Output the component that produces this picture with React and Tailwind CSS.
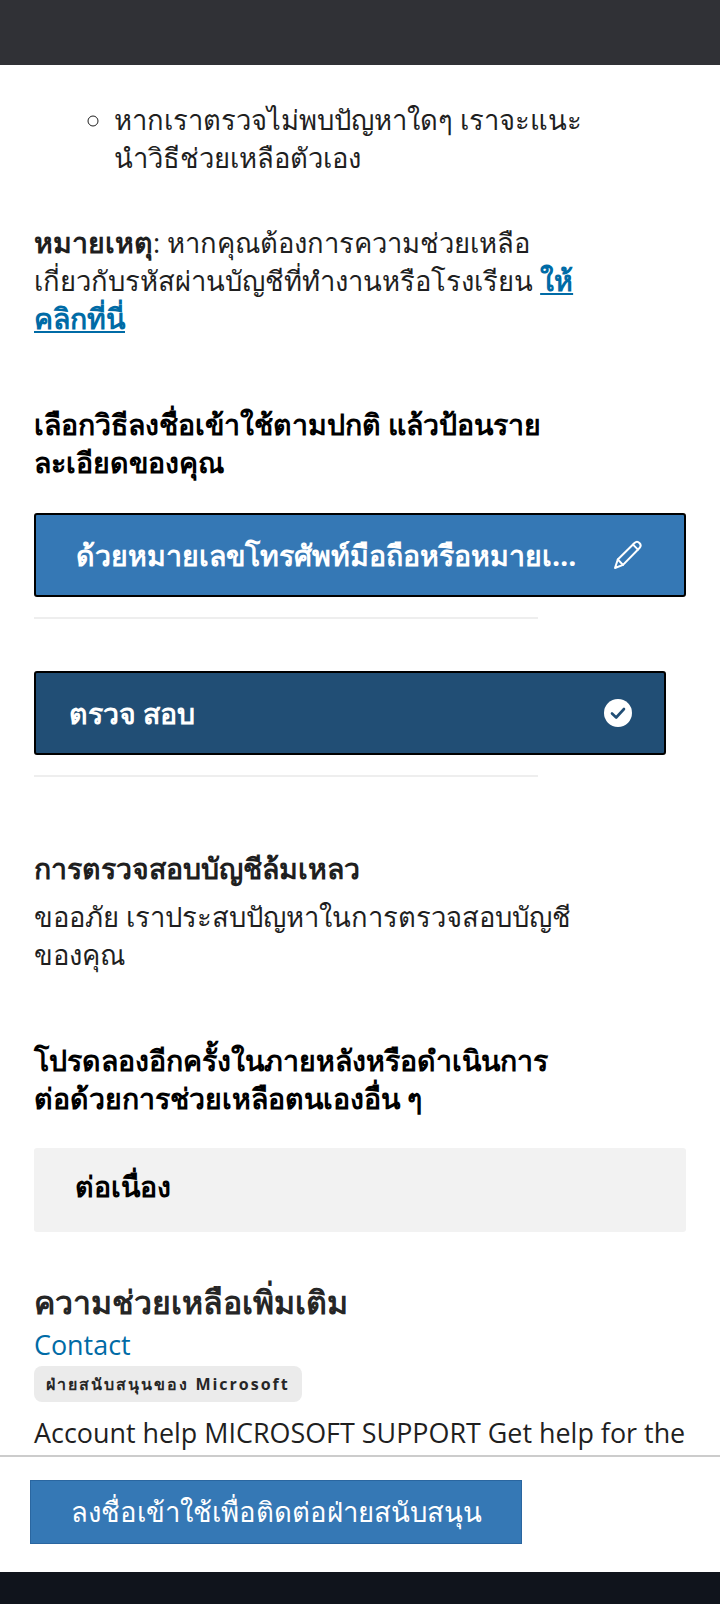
function PencilIcon() {
  return (
    <svg className="shrink-0" width="30" height="30" viewBox="0 0 30 30" fill="none" stroke="white" strokeWidth="2" strokeLinejoin="round" strokeLinecap="round">
      <path d="M1 28 L3.8 19.5 L20.5 3 C22 1.6 24 1.6 25.4 3 C26.9 4.5 26.9 6.5 25.5 8 L9 24.9 Z" />
      <path d="M3.8 19.5 L9 24.9" />
      <path d="M19 4.6 L24 9.6" />
    </svg>
  )
}

function CheckIcon() {
  return (
    <svg width="28" height="28" viewBox="0 0 28 28">
      <circle cx="14" cy="14" r="14" fill="white" />
      <path d="M8 14.5 L12.2 18.5 L20 10" fill="none" stroke="#214e75" strokeWidth="2.6" strokeLinecap="round" strokeLinejoin="round" />
    </svg>
  )
}

export default function App() {
  return (
    <div className="flex h-[1604px] w-[720px] flex-col overflow-hidden bg-white font-['Open_Sans','Noto_Sans',sans-serif] text-[#1f1f1f]">
      <div className="h-[65px] shrink-0 bg-[#303136]" />

      <main className="min-h-0 flex-1 overflow-hidden px-[34px] text-[27.4px] leading-[38px]">
        <ul className="mt-[36px] ml-[80px] list-[circle]">
          <li>หากเราตรวจไม่พบปัญหาใดๆ เราจะแนะ<br />นำวิธีช่วยเหลือตัวเอง</li>
        </ul>

        <p className="mt-[47px]">
          <b className="text-[28.5px] leading-none">หมายเหตุ</b>: หากคุณต้องการความช่วยเหลือ<br />
          เกี่ยวกับรหัสผ่านบัญชีที่ทำงานหรือโรงเรียน{' '}
          <a className="text-[28.5px] leading-none font-bold text-[#006ba6] underline">ให้<br />คลิกที่นี่</a>
        </p>

        <h2 className="mt-[67px] text-[28.5px] font-bold text-black">เลือกวิธีลงชื่อเข้าใช้ตามปกติ แล้วป้อนราย<br />ละเอียดของคุณ</h2>

        <div className="mt-[32px] flex h-[84px] items-center justify-between rounded-[3px] border-2 border-black bg-[#3578b5] px-[40px] text-[28.5px] font-bold text-white">
          <span className="w-[508px] truncate">ด้วยหมายเลขโทรศัพท์มือถือหรือหมายเลขอื่น</span>
          <PencilIcon />
        </div>
        <div className="mt-[20px] h-[2px] w-[504px] bg-[#eeeeee]" />

        <div className="mt-[52px] flex h-[84px] w-[632px] items-center justify-between rounded-[3px] border-2 border-black bg-[#214e75] pr-[32px] pl-[33px] text-[28.5px] font-bold text-white">
          <span>ตรวจ สอบ</span>
          <CheckIcon />
        </div>
        <div className="mt-[20px] h-[2px] w-[504px] bg-[#eeeeee]" />

        <h3 className="mt-[72px] text-[28.5px] font-bold">การตรวจสอบบัญชีล้มเหลว</h3>
        <p className="mt-[11px]">ขออภัย เราประสบปัญหาในการตรวจสอบบัญชี<br />ของคุณ</p>

        <h2 className="mt-[67px] text-[28.5px] font-bold text-black">โปรดลองอีกครั้งในภายหลังหรือดำเนินการ<br />ต่อด้วยการช่วยเหลือตนเองอื่น ๆ</h2>

        <div className="mt-[31px] flex h-[84px] items-center rounded-[3px] bg-[#f2f2f2] pb-[9px] pl-[41px] text-[28.5px] font-bold text-black">ต่อเนื่อง</div>

        <h2 className="mt-[47px] text-[32px] leading-[46px] font-bold text-[#262626]">ความช่วยเหลือเพิ่มเติม</h2>
        <a className="mt-[1px] block text-[26.9px] text-[#006ba6]">Contact</a>
        <span className="mt-[2px] flex h-[36px] w-[268px] items-center justify-center rounded-[8px] bg-[#ebebeb] text-[16px] leading-none font-bold tracking-[2px] text-[#262626]">ฝ่ายสนับสนุนของ Microsoft</span>
        <p className="mt-[12px] text-[26.9px]">Account help MICROSOFT SUPPORT Get help for the</p>
      </main>

      <div className="h-[117px] shrink-0 border-t-2 border-[#cccccc] bg-white pt-[23px] pl-[30px]">
        <button className="h-[64px] w-[492px] border border-[#2a66a0] bg-[#3578b5] text-[27.5px] text-white">ลงชื่อเข้าใช้เพื่อติดต่อฝ่ายสนับสนุน</button>
      </div>
      <div className="h-[32px] shrink-0 bg-[#10141c]" />
    </div>
  )
}
